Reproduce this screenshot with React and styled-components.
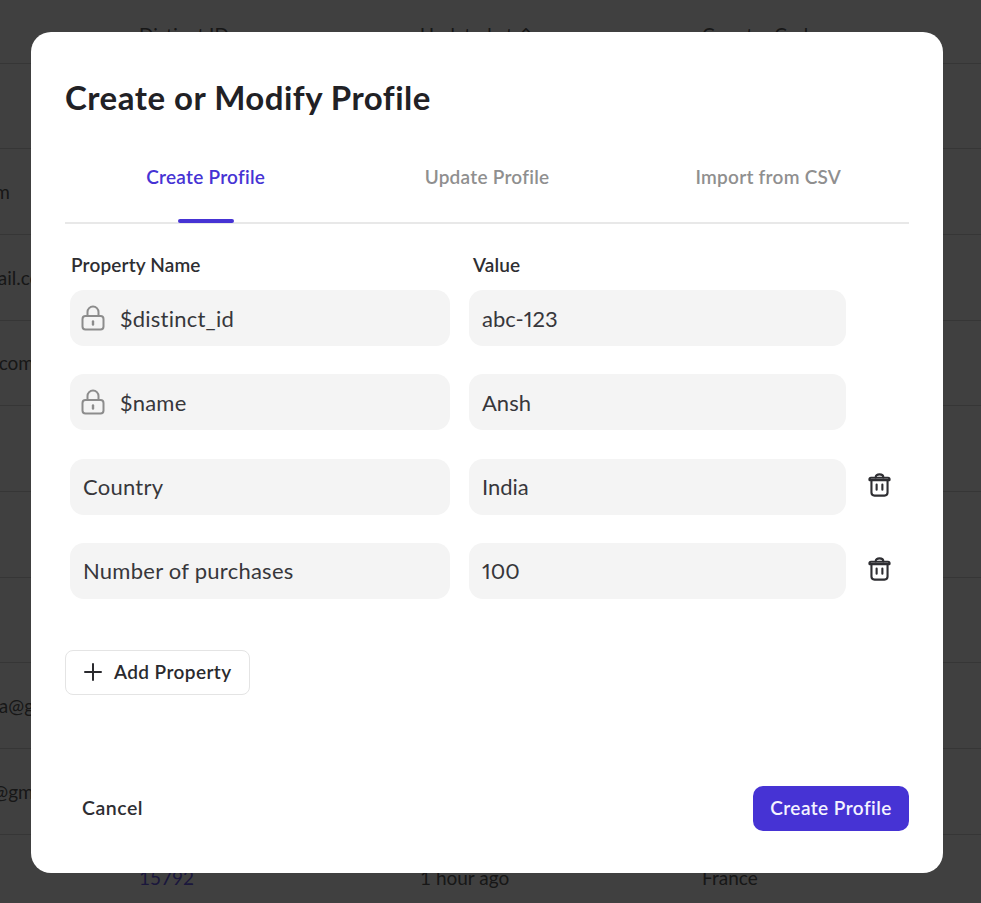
import React from "react";
import styled, { createGlobalStyle } from "styled-components";

const Global = createGlobalStyle`
  html, body { margin: 0; padding: 0; height: 100%; background: #fff; }
  body { font-family: "Lato", "Liberation Sans", sans-serif; color: #2a2a2e; overflow: hidden; }
`;

const Page = styled.div`
  position: relative;
  width: 981px;
  height: 903px;
  overflow: hidden;
`;

const Table = styled.div`
  padding-top: 20px;
  font-size: 19px;
`;

const TableRow = styled.div`
  display: grid;
  grid-template-columns: 139px 281px 282px 1fr;
  align-items: center;
  height: ${(p) => (p.$head ? "43.5px" : "85.7px")};
  padding-bottom: ${(p) => (p.$head ? "14px" : "0")};
  border-bottom: 1px solid #d8d8d8;
  box-sizing: border-box;
  white-space: nowrap;
  color: #5c5c5c;
`;

const FirstCell = styled.div`
  display: flex;
  justify-content: flex-end;
  overflow: hidden;
  padding-right: ${(p) => 139 - p.$end}px;
`;

const IdCell = styled.div`
  color: #6a5cf0;
`;

const Backdrop = styled.div`
  position: absolute;
  inset: 0;
  background: rgba(0, 0, 0, 0.75);
`;

const Modal = styled.div`
  position: absolute;
  left: 31px;
  top: 32px;
  width: 912px;
  height: 841px;
  box-sizing: border-box;
  padding: 45px 34px 42px;
  background: #fff;
  border-radius: 20px;
  display: flex;
  flex-direction: column;
`;

const Title = styled.h1`
  margin: 0;
  font-size: 33px;
  line-height: 40px;
  font-weight: 700;
  letter-spacing: 0.5px;
  color: #212125;
`;

const Tabs = styled.div`
  display: grid;
  grid-template-columns: repeat(3, 1fr);
  margin-top: 25px;
  border-bottom: 2px solid #e8e8e8;
`;

const Tab = styled.div`
  position: relative;
  height: 80px;
  display: flex;
  justify-content: center;
  align-items: center;
  padding-bottom: 12px;
  box-sizing: border-box;
  font-size: 19px;
  font-weight: 600;
  letter-spacing: 0.25px;
  color: ${(p) => (p.$active ? "#4633d4" : "#8f8f8f")};

  &::after {
    content: "";
    display: ${(p) => (p.$active ? "block" : "none")};
    position: absolute;
    left: 50%;
    bottom: -1px;
    width: 56px;
    height: 4px;
    margin-left: -28px;
    border-radius: 2px;
    background: #4633d4;
  }
`;

const Fields = styled.div`
  display: grid;
  grid-template-columns: 380px 377px 64px;
  column-gap: 19px;
  row-gap: 28.2px;
  padding-left: 5px;
  margin-top: 29px;
`;

const Label = styled.div`
  font-size: 19px;
  line-height: 24px;
  font-weight: 600;
  letter-spacing: 0.15px;
  color: #2e2e32;
  margin-bottom: -15px;
  padding-left: ${(p) => p.$indent || 0}px;
`;

const Field = styled.div`
  height: 56px;
  box-sizing: border-box;
  padding: 0 13px;
  display: flex;
  align-items: center;
  gap: 15px;
  background: #f4f4f4;
  border-radius: 14px;
  font-size: 22px;
  font-variant-numeric: proportional-nums;
  letter-spacing: ${(p) => (p.$name ? "0.25px" : "0")};
  color: #37373b;
`;

const LockSvg = styled.svg`
  flex: none;
  margin-left: -2px;
`;

const RowAction = styled.div`
  height: 56px;
  margin-left: -19px;
  padding-left: 22px;
  padding-bottom: 3px;
  display: flex;
  align-items: center;
  box-sizing: border-box;
`;

const AddButton = styled.div`
  align-self: flex-start;
  margin-top: 51px;
  height: 45px;
  width: 185px;
  box-sizing: border-box;
  display: flex;
  align-items: center;
  gap: 12px;
  padding-left: 18px;
  padding-bottom: 1px;
  border: 1px solid #e4e4e4;
  border-radius: 8px;
  font-size: 19px;
  font-weight: 600;
  letter-spacing: 0.4px;
  color: #2a2a2e;
`;

const Footer = styled.div`
  margin-top: auto;
  display: flex;
  justify-content: space-between;
  align-items: center;
`;

const CancelButton = styled.div`
  padding-left: 17px;
  padding-bottom: 2px;
  font-size: 19.5px;
  font-weight: 600;
  letter-spacing: 0.5px;
  color: #2e2e32;
`;

const PrimaryButton = styled.div`
  width: 156px;
  height: 45px;
  padding-bottom: 2px;
  box-sizing: border-box;
  display: flex;
  align-items: center;
  justify-content: center;
  border-radius: 10px;
  background: #4633d4;
  color: #f4f3ff;
  font-size: 19px;
  font-weight: 600;
  letter-spacing: 0.45px;
`;

function LockIcon() {
  return (
    <LockSvg width="24" height="26" viewBox="0 0 24 26" fill="none" stroke="#8c8c8c" strokeWidth="2">
      <rect x="1.5" y="11" width="21" height="13.5" rx="3" />
      <path d="M6.5 11V7a5.5 5.5 0 0 1 11 0V11" />
      <path d="M12 16.5v3" strokeWidth="2.4" strokeLinecap="round" />
    </LockSvg>
  );
}

function TrashIcon() {
  return (
    <svg width="23" height="24" viewBox="0 0 24 25" fill="none" stroke="#2e2e32" strokeWidth="2.2" strokeLinecap="round" strokeLinejoin="round">
      <path d="M1.5 6.5c0-1 .6-1.6 1.6-1.6h17.8c1 0 1.6.6 1.6 1.6v.9h-21z" />
      <path d="M8 4.6C8 2.6 9.6 1.4 12 1.4s4 1.2 4 3.2" />
      <path d="M3.6 7.6v12.8c0 2 1.2 3.2 3.2 3.2h10.4c2 0 3.2-1.2 3.2-3.2V7.6" />
      <path d="M9 12v5.5M15 12v5.5" />
    </svg>
  );
}

function PlusIcon() {
  return (
    <svg width="18" height="18" viewBox="0 0 18 18" stroke="#2a2a2e" strokeWidth="2" strokeLinecap="round">
      <path d="M9 1v16M1 9h16" />
    </svg>
  );
}

const backRows = [
  { email: "", end: 139 },
  { email: "ansh@gmail.com", end: 10 },
  { email: "ria@gmail.com", end: 56 },
  { email: "sam@mail.com", end: 34 },
  { email: "", end: 139 },
  { email: "", end: 139 },
  { email: "", end: 139 },
  { email: "tina@gmail.com", end: 108 },
  { email: "leo@gmail.com", end: 92 },
  { email: "", end: 139, id: "15792", updated: "1 hour ago", country: "France" },
];

const props = [
  { name: "$distinct_id", value: "abc-123", locked: true },
  { name: "$name", value: "Ansh", locked: true },
  { name: "Country", value: "India" },
  { name: "Number of purchases", value: "100" },
];

export default function App() {
  return (
    <Page>
      <Global />
      <Table>
        <TableRow $head>
          <div />
          <div>Distinct ID</div>
          <div>Updated at ⌃</div>
          <div>Country Code</div>
        </TableRow>
        {backRows.map((r, i) => (
          <TableRow key={i}>
            <FirstCell $end={r.end}>{r.email}</FirstCell>
            <IdCell>{r.id}</IdCell>
            <div>{r.updated}</div>
            <div>{r.country}</div>
          </TableRow>
        ))}
      </Table>
      <Backdrop />
      <Modal>
        <Title>Create or Modify Profile</Title>
        <Tabs>
          <Tab $active>Create Profile</Tab>
          <Tab>Update Profile</Tab>
          <Tab>Import from CSV</Tab>
        </Tabs>
        <Fields>
          <Label $indent={1}>Property Name</Label>
          <Label $indent={4}>Value</Label>
          <div />
          {props.map((p) => (
            <React.Fragment key={p.name}>
              <Field $name>
                {p.locked && <LockIcon />}
                {p.name}
              </Field>
              <Field>{p.value}</Field>
              <RowAction>{!p.locked && <TrashIcon />}</RowAction>
            </React.Fragment>
          ))}
        </Fields>
        <AddButton>
          <PlusIcon />
          Add Property
        </AddButton>
        <Footer>
          <CancelButton>Cancel</CancelButton>
          <PrimaryButton>Create Profile</PrimaryButton>
        </Footer>
      </Modal>
    </Page>
  );
}
